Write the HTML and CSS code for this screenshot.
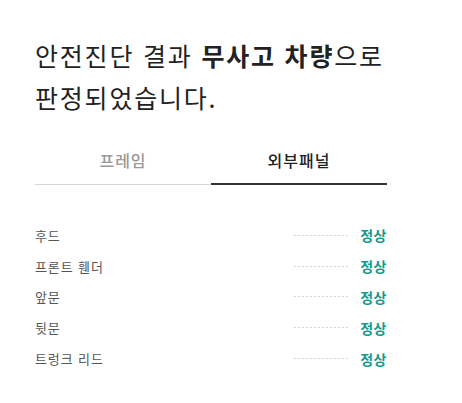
FILE: index.html
```html
<!DOCTYPE html>
<html lang="ko">
<head>
<meta charset="utf-8">
<link rel="stylesheet" href="styles.css">
</head>
<body>
<div class="wrap">
  <h1 class="title">안전진단 결과 <strong>무사고 차량</strong>으로<br>판정되었습니다.</h1>
  <div class="tabs">
    <div class="tab">프레임</div>
    <div class="tab active">외부패널</div>
  </div>
  <ul class="list">
    <li class="row"><span class="name">후드</span><span class="dots"></span><span class="status">정상</span></li>
    <li class="row"><span class="name">프론트 휀더</span><span class="dots"></span><span class="status">정상</span></li>
    <li class="row"><span class="name">앞문</span><span class="dots"></span><span class="status">정상</span></li>
    <li class="row"><span class="name">뒷문</span><span class="dots"></span><span class="status">정상</span></li>
    <li class="row"><span class="name">트렁크 리드</span><span class="dots"></span><span class="status">정상</span></li>
  </ul>
</div>
</body>
</html>
```
FILE: styles.css
```css
html, body {
  margin: 0;
  padding: 0;
  background: #fff;
}
body {
  font-family: "Noto Sans CJK KR", "Noto Sans", sans-serif;
  color: #222;
}
.wrap {
  width: 352px;
  padding: 34px 0 0 35px;
}
.title {
  margin: 0;
  font-size: 25px;
  line-height: 42px;
  font-weight: 400;
  color: #222;
  letter-spacing: 1.8px;
}
.title strong {
  font-weight: 700;
}
.tabs {
  display: flex;
  margin-top: 20px;
}
.tab {
  flex: 1;
  text-align: center;
  font-size: 16px;
  line-height: 22px;
  letter-spacing: 1px;
  padding: 11px 0 13px;
  color: #999;
  font-weight: 500;
  border-bottom: 1px solid #d8d8d8;
}
.tab.active {
  color: #222;
  border-bottom: 2px solid #333;
  padding-bottom: 12px;
}
.list {
  list-style: none;
  margin: 0;
  padding: 35px 0 0;
}
.row {
  display: flex;
  align-items: center;
  height: 30.8px;
}
.name {
  flex: 1;
  font-size: 13px;
  letter-spacing: 0.9px;
  color: #555;
}
.dots {
  width: 55px;
  height: 1px;
  background: repeating-linear-gradient(to right, #d4d4d4 0 2px, transparent 2px 4px);
  margin-right: 11px;
}
.status {
  font-size: 14px;
  letter-spacing: 0.5px;
  color: #16998a;
  font-weight: 700;
}
```
